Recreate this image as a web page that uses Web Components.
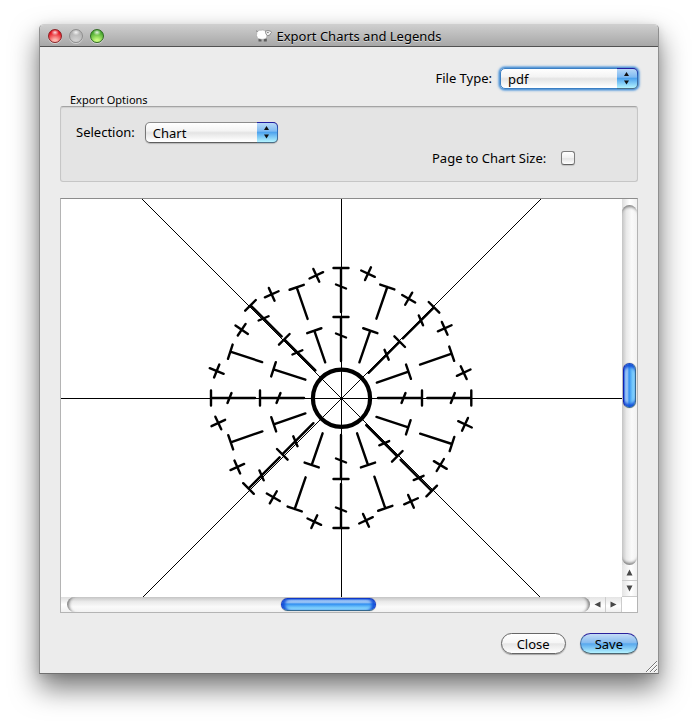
<!DOCTYPE html>
<html lang="en">
<head>
<meta charset="utf-8">
<title>Export Charts and Legends</title>
<style>
  body {
    margin: 0;
    padding: 24px 39px 54px;
    background: #fff;
    color: #000;
    font: 13px/16px "Noto Sans", "Open Sans", sans-serif;
  }
</style>
</head>
<body>
<export-dialog></export-dialog>

<template id="dialog-window-template">
  <style>
    :host {
      display: block;
      position: relative;
      border: 1px solid #8f8f8f;
      border-top-color: #cfcfcf;
      border-bottom-color: #707070;
      border-radius: 5px 5px 0 0;
      background: #ececec;
      box-shadow: 0 14px 28px rgba(0, 0, 0, .54), 0 2px 8px rgba(0, 0, 0, .1);
    }
    header {
      display: grid;
      grid-template-columns: 68px 1fr 76px;
      align-items: center;
      box-sizing: border-box;
      height: 22px;
      padding: 0 0 0 8px;
      border-bottom: 1px solid #515151;
      border-radius: 4px 4px 0 0;
      background: linear-gradient(#cecece, #a7a7a7);
    }
    .lights { display: flex; gap: 7px; }
    .lights button {
      width: 14px;
      height: 14px;
      padding: 0;
      border: 1px solid var(--rim);
      border-radius: 50%;
      background:
        radial-gradient(ellipse 4px 3px at 50% 20%, rgba(255, 255, 255, .85), rgba(255, 255, 255, 0)),
        radial-gradient(circle at 50% 95%, var(--glow) 15%, var(--body) 75%);
      box-shadow: 0 1px 0 rgba(255, 255, 255, .45);
    }
    .close { --rim: #8c2226; --glow: #ffb5ac; --body: #e3101c; }
    .min { --rim: #8e8e8e; --glow: #cfcfcf; --body: #b2b2b2; }
    .zoom { --rim: #2f6a20; --glow: #c4fa7c; --body: #44a52b; }
    h1 {
      display: flex;
      align-items: center;
      justify-content: center;
      gap: 4px;
      margin: 0;
      font: inherit;
      text-shadow: 0 1px 0 rgba(255, 255, 255, .5);
      white-space: nowrap;
    }
    h1 svg { width: 16px; height: 14px; }
    main { padding: 21px 20px 19px; }
    .grip { position: absolute; right: 1px; bottom: 1px; width: 11px; height: 11px; }
  </style>
  <header>
    <div class="lights">
      <button class="close" aria-label="Close window"></button>
      <button class="min" aria-label="Minimize window" disabled></button>
      <button class="zoom" aria-label="Zoom window"></button>
    </div>
    <h1>
      <svg viewBox="0 0 16 14" aria-hidden="true">
        <path d="M2.500 9.500h3v3h-3zM7.800 9.500h3v3h-3z" fill="#5c5c5c"/>
        <path d="M2 2.200Q3 .8 5 1.300Q7 .6 8.600 1.600Q10.400 1 10.800 3.400V7.400Q10.600 10 8.200 10Q6 10.700 4 10Q1 10 1 7.500Q0 6.400 .8 5Q.2 3 2 2.200Z" fill="#fff" stroke="#9a9a9a" stroke-width=".5"/>
        <path d="M9.400 2.200Q12 1 14.500 2.200L15.600 3.300L14.600 4.400Q14 7 11.600 6.600Q9.600 6 9.400 2.200Z" fill="#f4f4f4" stroke="#777" stroke-width=".8"/>
        <path d="M1.200 2.700L.3 1.600M11.200 3.600h1.400" stroke="#666"/>
      </svg>
      <span><slot name="title"></slot></span>
    </h1>
  </header>
  <main><slot></slot></main>
  <svg class="grip" viewBox="0 0 11 11" aria-hidden="true" fill="none">
    <path d="M1 11L11 1M5 11L11 5M9 11L11 9" stroke="#fff"/>
    <path d="M0 11L11 0M4 11L11 4M8 11L11 8" stroke="#777"/>
  </svg>
</template>

<template id="popup-field-template">
  <style>
    :host { display: flex; align-items: center; gap: var(--popup-gap, 10px); }
    label { padding-bottom: 2px; white-space: nowrap; }
    .box { display: grid; width: var(--popup-width, 133px); }
    select, .cap { grid-area: 1 / 1; }
    select {
      appearance: none;
      box-sizing: border-box;
      width: 100%;
      height: 21px;
      margin: 0;
      padding: 0 24px 0 7px;
      border: 1px solid #777;
      border-top-color: #8c8c8c;
      border-bottom-color: #5e5e5e;
      border-radius: 5px;
      outline: none;
      background: linear-gradient(#fff, #f4f4f4 40%, #e4e4e4 52%, #fff 95%);
      box-shadow: 0 1px 1px rgba(0, 0, 0, .2);
      color: inherit;
      font: inherit;
    }
    .cap { justify-self: end; width: 21px; height: 21px; pointer-events: none; }
    :host([active]) select {
      border-color: #3b7fc4;
      box-shadow: 0 0 1px 1px #5c9ad6, 0 0 2px 2px rgba(101, 163, 222, .8);
    }
  </style>
  <label for="field"></label>
  <div class="box">
    <select id="field"></select>
    <svg class="cap" viewBox="0 0 21 21" aria-hidden="true">
      <defs>
        <linearGradient id="g" x2="0" y2="1">
          <stop offset="0" stop-color="#b8d8f7"/>
          <stop offset=".42" stop-color="#80bbf2"/>
          <stop offset=".5" stop-color="#4fa4ee"/>
          <stop offset="1" stop-color="#b4f4ff"/>
        </linearGradient>
        <linearGradient id="r" x2="0" y2="1">
          <stop offset="0" stop-color="#2118a0"/>
          <stop offset=".4" stop-color="#2f6bbb"/>
          <stop offset="1" stop-color="#4d6f86"/>
        </linearGradient>
      </defs>
      <path d="M0 0H16A5 5 0 0 1 21 5V16A5 5 0 0 1 16 21H0Z" fill="url(#r)"/>
      <path d="M0 1H16A4 4 0 0 1 20 5V16A4 4 0 0 1 16 20H0Z" fill="url(#g)"/>
      <path d="M7 8L9.500 4L12 8ZM7 12.500L9.500 16.500L12 12.500Z" fill="#111"/>
    </svg>
  </div>
</template>

<template id="check-field-template">
  <style>
    :host { display: flex; align-items: center; gap: 10px; }
    label { min-width: 119px; white-space: nowrap; }
    input {
      appearance: none;
      width: 14px;
      height: 14px;
      margin: 0;
      border: 1px solid #7c7c7c;
      border-bottom-color: #616161;
      border-radius: 3px;
      background: linear-gradient(#fff, #f0f0f0 50%, #e4e4e4 55%, #fff);
      box-shadow: 0 1px 1px rgba(0, 0, 0, .15);
    }
    input:checked { background: #4fa4ee; }
  </style>
  <label for="check"><slot></slot></label>
  <input id="check" type="checkbox">
</template>

<template id="option-group-template">
  <style>
    :host { display: block; }
    fieldset { min-width: 0; margin: 0; padding: 0; border: 0; }
    legend { padding: 0 10px; font-size: 11px; line-height: 12px; }
    .well {
      padding: 15px 15px 14px;
      border: 1px solid #c6c6c6;
      border-top: 1px solid #a4a4a4;
      border-radius: 3px;
      background: #e4e4e4;
      box-shadow: inset 0 1px 1px #cfcfcf;
    }
  </style>
  <fieldset>
    <legend></legend>
    <div class="well"><slot></slot></div>
  </fieldset>
</template>

<template id="push-button-template">
  <style>
    :host { display: block; }
    button {
      display: block;
      height: 21px;
      padding: 0 15px;
      border: 1px solid #666;
      border-radius: 11px;
      background: linear-gradient(#fff, #f6f6f6 45%, #e6e6e6 52%, #fff);
      box-shadow: 0 1px 1px rgba(0, 0, 0, .3);
      color: inherit;
      font: inherit;
      line-height: 18px;
    }
    :host([primary]) button {
      padding: 0 14px;
      border-color: #2a219c #3e6ca0 #4b6672;
      background: linear-gradient(#c5dcf6, #86bcf0 45%, #58a8ed 52%, #b4f2ff);
    }
  </style>
  <button type="button"><slot></slot></button>
</template>

<template id="scroll-bar-template">
  <style>
    :host { display: flex; --dir: to bottom; }
    :host([vertical]) { flex-direction: column; --dir: to right; }
    .track {
      flex: 1;
      display: grid;
      grid-template-columns: 220fr 95px 219fr;
      min-width: 0;
      background: linear-gradient(var(--dir), #c4c4c4, #e9e9e9 30%, #fafafa 65%, #f2f2f2);
      border-radius: 8px;
      box-shadow: inset 5px 0 3px -3px rgba(0, 0, 0, .45), inset -5px 0 3px -3px rgba(0, 0, 0, .45);
    }
    .base { flex: 1; display: flex; padding-left: 6px; background: linear-gradient(var(--dir), #ddd, #fff 50%, #f0f0f0); }
    :host([vertical]) .base { flex-direction: column; padding: 6px 0 0; }
    :host([vertical]) .track {
      grid-template: 159fr 45px 158fr / 1fr;
      box-shadow: inset 0 5px 3px -3px rgba(0, 0, 0, .45), inset 0 -5px 3px -3px rgba(0, 0, 0, .45);
    }
    .thumb {
      grid-column: 2;
      margin: 1px 0;
      box-sizing: border-box;
      border: 1px solid #1038c8;
      border-bottom-color: #34688e;
      border-radius: 7px;
      background: linear-gradient(var(--dir), #3c74e4, #9cc4f6 15%, #8cbcf4 35%, #2f8df0 45%, #5cb4f8 65%, #a2ecff);
      box-shadow: inset 4px 0 3px -1px #1450d8, inset -4px 0 3px -1px #1450d8, 0 0 1px rgba(0, 0, 0, .6);
    }
    :host([vertical]) .thumb {
      grid-area: 2 / 1;
      margin: 0 1px;
      border-color: #1746c0 #34688e #34688e #1020b0;
      box-shadow: inset 0 4px 3px -1px #1450d8, inset 0 -4px 3px -1px #1450d8, 0 0 1px rgba(0, 0, 0, .6);
    }
    button {
      display: grid;
      place-items: center;
      width: 16px;
      padding: 0;
      border: 0;
      border-right: 1px solid #ccc;
      background: linear-gradient(var(--dir), #e4e4e4, #fff 60%, #f0f0f0);
    }
    :host([vertical]) button { width: auto; height: 16px; border: 0; border-bottom: 1px solid #ccc; }
    svg { width: 7px; height: 7px; fill: #484848; }
    .back svg { transform: rotate(-90deg); }
    .next svg { transform: rotate(90deg); }
    :host([vertical]) .back svg { transform: none; }
    :host([vertical]) .next svg { transform: rotate(180deg); }
  </style>
  <div class="base"><div class="track" role="scrollbar" aria-valuenow="50"><div class="thumb"></div></div></div>
  <button class="back" aria-label="Scroll back"><svg viewBox="0 0 7 7"><path d="M.5 6.500L3.500 .5L6.500 6.500Z"/></svg></button>
  <button class="next" aria-label="Scroll forward"><svg viewBox="0 0 7 7"><path d="M.5 6.500L3.500 .5L6.500 6.500Z"/></svg></button>
</template>

<template id="chart-view-template">
  <style>
    :host {
      display: grid;
      grid-template: auto 15px / minmax(0, 1fr) 15px;
      border: 1px solid #b4b4b4;
      border-top-color: #8c8c8c;
      background: #fff;
    }
    .chart { display: block; width: 100%; height: 398px; }
    .guides { stroke: #000; stroke-width: 1; shape-rendering: crispEdges; }
    .stitches { fill: none; stroke: #000; stroke-width: 2.4; stroke-linecap: round; }
    scroll-bar { min-width: 0; min-height: 0; }
  </style>
  <svg class="chart" viewBox="61 199 561 398" preserveAspectRatio="xMidYMid slice" role="img" aria-label="Crochet chart">
    <g class="guides">
      <path d="M341.500 199V597M61 398.500H622"/>
      <path d="M142 199L540.500 597.500M541 199L142.500 597.500"/>
    </g>
    <circle cx="341.500" cy="398.300" r="28.600" fill="none" stroke="#000" stroke-width="4.200"/>
    <g class="stitches"></g>
  </svg>
  <scroll-bar vertical></scroll-bar>
  <scroll-bar></scroll-bar>
</template>

<template id="export-dialog-template">
  <style>
    :host { display: block; }
    .type { display: flex; justify-content: flex-end; --popup-width: 138px; --popup-gap: 8px; }
    option-group { margin: 5px 0 16px; }
    .options { display: grid; grid-template-columns: 1fr 190px; row-gap: 6px; }
    check-field { grid-area: 2 / 2; min-height: 18px; }
    .actions { display: flex; justify-content: flex-end; gap: 14px; margin-top: 20px; }
  </style>
  <dialog-window>
    <span slot="title">Export Charts and Legends</span>
    <div class="type"><popup-field label="File Type:" options="pdf,svg,png" active></popup-field></div>
    <option-group label="Export Options">
      <div class="options">
        <popup-field label="Selection:" options="Chart,Legend"></popup-field>
        <check-field>Page to Chart Size:</check-field>
      </div>
    </option-group>
    <chart-view></chart-view>
    <div class="actions">
      <push-button>Close</push-button>
      <push-button primary>Save</push-button>
    </div>
  </dialog-window>
</template>

<script>
  class TemplateElement extends HTMLElement {
    constructor() {
      super();
      const template = document.getElementById(this.localName + '-template');
      this.attachShadow({ mode: 'open' }).append(template.content.cloneNode(true));
    }
  }

  class PopupField extends TemplateElement {
    connectedCallback() {
      this.shadowRoot.querySelector('label').textContent = this.getAttribute('label');
      const select = this.shadowRoot.querySelector('select');
      select.replaceChildren(...this.getAttribute('options').split(',').map(text => new Option(text)));
    }
  }

  class OptionGroup extends TemplateElement {
    connectedCallback() {
      this.shadowRoot.querySelector('legend').textContent = this.getAttribute('label');
    }
  }

  // Each stitch is [x, y, rotation in degrees].
  const STITCHES = [
    ['M-7.500 0H7.500M0 0V44M-5 16.500L5 20.500', [
      [341, 268, 0], [341, 317, 0],
      [434, 307.3, 45], [399.700, 341.7, 45],
      [471.3, 398, 90], [422, 398, 90],
      [431.7, 491, 135], [397.3, 456.3, 135],
      [341, 528, 180], [341, 479, 180],
      [248.5, 488.5, -135], [282.3, 454.3, -135],
      [211, 398, -90], [260, 398, -90],
      [250.5, 305.3, -45], [284.3, 339.3, -45]
    ]],
    ['M-7.500 0H7.500M0 0V33.500', [
      [296.7, 287.3, -19], [314.3, 330.7, -19],
      [230.3, 351.7, -72], [273.5, 369.3, -72],
      [387.3, 287, 19], [370.3, 330.7, 19],
      [451.7, 353.7, 71], [408.5, 371.7, 71],
      [273.7, 424.3, -109], [230.7, 442.3, -109],
      [311.7, 465, -161], [294.7, 509, -161],
      [408.3, 427.3, 108], [452, 444, 108],
      [368, 465, 161], [385.3, 508.3, 161]
    ]],
    ['M-7.500 0H7.500M0 -7V7', [
      [316.3, 275.3, -25], [271.7, 294.3, -24], [241.7, 329.7, 34], [216.7, 371, 22],
      [368, 273.7, 25], [408.7, 298.7, 30], [444.7, 328.3, -24], [463.7, 372.7, -25],
      [218.3, 423, -25], [237.3, 467, -24], [273.3, 497.3, 30], [314.3, 521.7, 25],
      [465, 424.3, 25], [440.3, 465, 31], [411, 501.3, -24], [366, 520.3, -25]
    ]]
  ];

  class ChartView extends TemplateElement {
    connectedCallback() {
      this.shadowRoot.querySelector('.stitches').innerHTML = STITCHES.map(([d, spots]) =>
        spots.map(([x, y, r]) => `<path d="${d}" transform="translate(${x} ${y}) rotate(${r})"/>`).join('')
      ).join('');
    }
  }

  customElements.define('dialog-window', class extends TemplateElement {});
  customElements.define('popup-field', PopupField);
  customElements.define('check-field', class extends TemplateElement {});
  customElements.define('option-group', OptionGroup);
  customElements.define('push-button', class extends TemplateElement {});
  customElements.define('scroll-bar', class extends TemplateElement {});
  customElements.define('chart-view', ChartView);
  customElements.define('export-dialog', class extends TemplateElement {});
</script>
</body>
</html>
